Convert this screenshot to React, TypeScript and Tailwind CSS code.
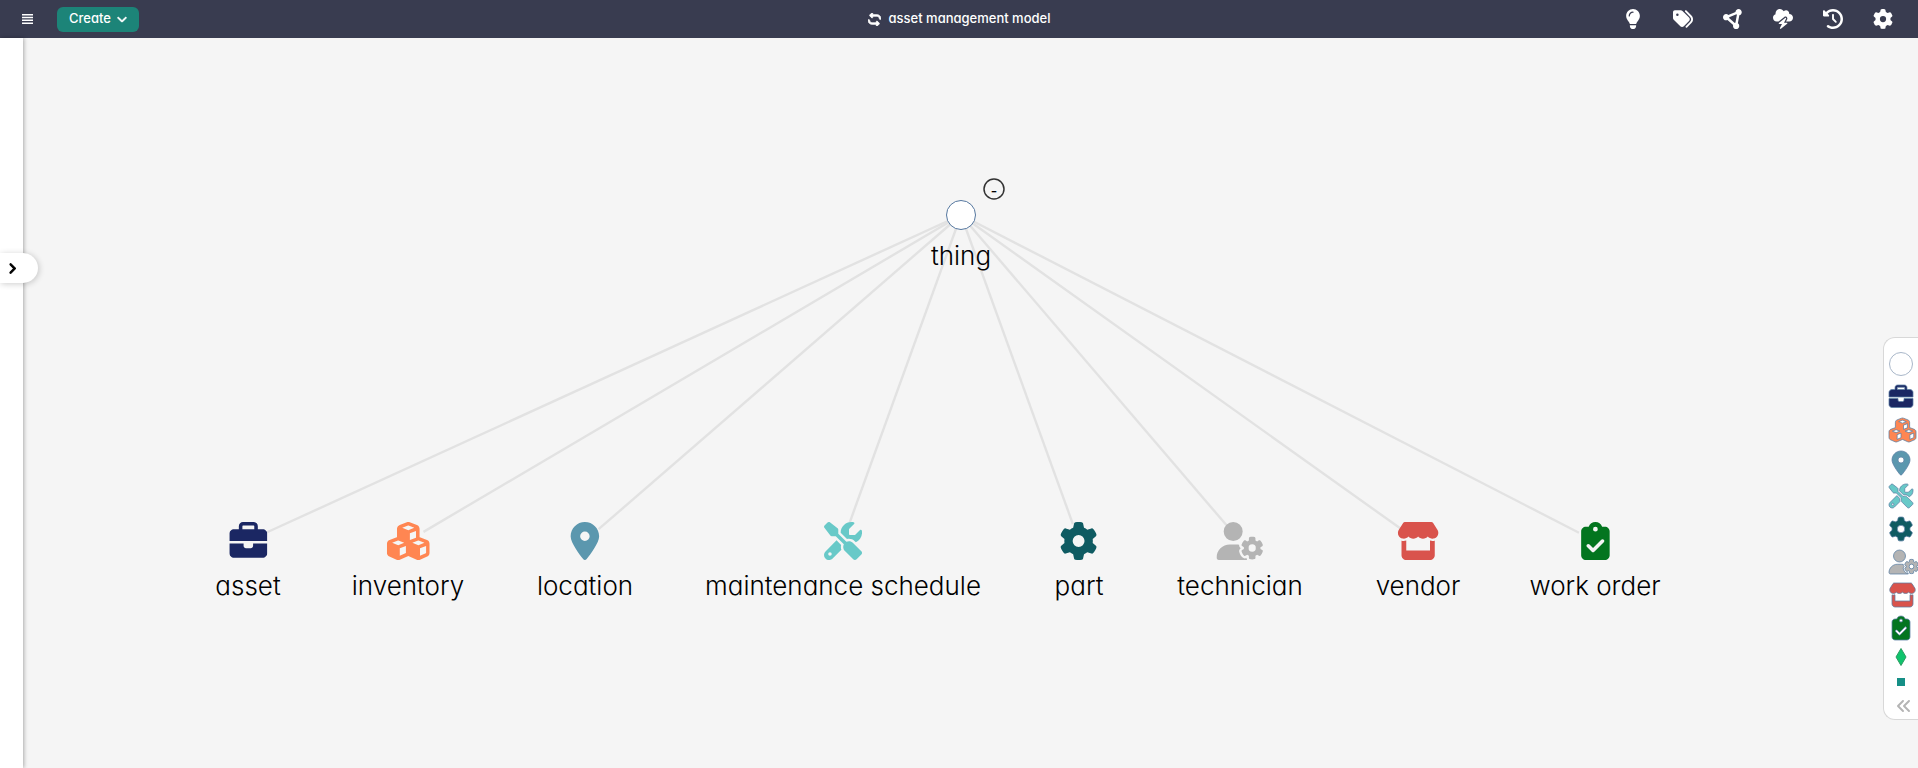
import { FaAnglesLeft, FaBriefcase, FaChevronDown, FaChevronRight, FaCircleNodes, FaClipboardCheck, FaClockRotateLeft, FaCloudBolt, FaCubes, FaGear, FaLightbulb, FaLocationDot, FaRepeat, FaScrewdriverWrench, FaStore, FaTags, FaUserGear } from 'react-icons/fa6';
import type { IconType } from 'react-icons';

type Concept = { label: string; x: number; icon: IconType; color: string; size: string; small: string };

const root = { x: 961, y: 177 };
const childY = 503;
const lineGap = 18;

const concepts: Concept[] = [
  { label: 'asset', x: 248, icon: FaBriefcase, color: 'text-[#1b2763]', size: 'w-[38px]', small: 'w-6' },
  { label: 'inventory', x: 408, icon: FaCubes, color: 'text-[#ff8652]', size: 'w-[43px]', small: 'w-[27px]' },
  { label: 'location', x: 585, icon: FaLocationDot, color: 'text-[#5b97ae]', size: 'w-[38px]', small: 'w-6' },
  { label: 'maintenance schedule', x: 843, icon: FaScrewdriverWrench, color: 'text-[#68c9c8]', size: 'w-[38px]', small: 'w-6' },
  { label: 'part', x: 1079, icon: FaGear, color: 'text-[#0f5b62]', size: 'w-[38px]', small: 'w-6' },
  { label: 'technician', x: 1240, icon: FaUserGear, color: 'text-[#b4b4b4]', size: 'w-[48px]', small: 'w-[30px]' },
  { label: 'vendor', x: 1418, icon: FaStore, color: 'text-[#d9534c]', size: 'w-[43px]', small: 'w-[27px]' },
  { label: 'work order', x: 1595, icon: FaClipboardCheck, color: 'text-[#03751f]', size: 'w-[38px]', small: 'w-6' },
];

const tools: { label: string; icon: IconType }[] = [
  { label: 'Ideas', icon: FaLightbulb },
  { label: 'Tags', icon: FaTags },
  { label: 'Graph', icon: FaCircleNodes },
  { label: 'Inference', icon: FaCloudBolt },
  { label: 'History', icon: FaClockRotateLeft },
  { label: 'Settings', icon: FaGear },
];

function Header() {
  return (
    <header className="grid h-[38px] shrink-0 grid-cols-3 items-center bg-[#393c50] text-white">
      <div className="flex items-center gap-6 pl-[22px]">
        <button type="button" aria-label="Menu">
          <svg className="h-2.5 w-[11px]" viewBox="0 0 11 10" fill="currentColor" aria-hidden="true">
            <path d="M0 0h11v1.5H0zM0 2.8h11v1.5H0zM0 5.6h11v1.5H0zM0 8.4h11v1.5H0z" />
          </svg>
        </button>
        <button type="button" className="flex h-[25px] w-[82px] items-center justify-center gap-1.5 rounded-md bg-[#1c8478] text-[13px] font-medium">
          Create
          <FaChevronDown className="h-2.5 w-2.5 stroke-current stroke-[40px]" />
        </button>
      </div>
      <div className="flex items-center justify-center gap-2 text-[13px] font-medium">
        <FaRepeat className="h-[13px] w-[13px] -scale-x-100 stroke-current stroke-[30px]" />
        <h1>asset management model</h1>
      </div>
      <div className="flex items-center justify-end gap-[30px] pr-[25px]">
        {tools.map(({ label, icon: Icon }) => (
          <button key={label} type="button" aria-label={label}>
            <Icon className="h-5 w-5" />
          </button>
        ))}
      </div>
    </header>
  );
}

function Edges() {
  return (
    <svg className="absolute inset-0 h-full w-full" aria-hidden="true">
      {concepts.map(({ label, x }) => {
        const dx = x - root.x;
        const dy = childY - root.y;
        const k = lineGap / Math.hypot(dx, dy);
        return (
          <line key={label} x1={root.x} y1={root.y} x2={x - dx * k} y2={childY - dy * k} stroke="#e2e2e2" strokeWidth="2.4" />
        );
      })}
      <circle cx={root.x} cy={root.y} r="14.5" fill="#fff" stroke="#55779f" />
    </svg>
  );
}

function Canvas() {
  return (
    <section className="relative min-w-0 flex-1 overflow-hidden" aria-label="Model graph">
      <div className="absolute inset-y-0 -left-[23px] right-0">
        <Edges />
        <span className="absolute left-[961px] top-[200px] -translate-x-1/2 text-[26px] leading-9 font-light">thing</span>
        <button type="button" aria-label="Collapse thing" className="absolute left-[983px] top-[140px] flex h-[22px] w-[22px] items-center justify-center">
          <svg className="absolute inset-0 h-full w-full" viewBox="0 0 22 22" fill="none" stroke="#333" strokeWidth="1.5" aria-hidden="true">
            <circle cx="11" cy="11" r="10" />
          </svg>
          <span className="pt-1 text-sm leading-4 font-medium">-</span>
        </button>
        {concepts.map(({ label, x, icon: Icon, color, size }) => (
          <div key={label} className="absolute top-[484px] flex -translate-x-1/2 flex-col items-center gap-2" style={{ left: x }}>
            <Icon className={`h-[38px] ${size} ${color}`} />
            <span className="whitespace-nowrap text-[26px] leading-9 font-light">{label}</span>
          </div>
        ))}
      </div>
    </section>
  );
}

function Palette() {
  return (
    <aside className="absolute right-0 top-[337px] flex w-[35px] flex-col items-center overflow-hidden rounded-l-xl border border-r-0 border-[#d8d8d8] bg-white pb-[5px] pt-3.5">
      <div className="flex w-6 flex-col items-start gap-[9px]">
        <span className="h-6 w-6 rounded-full border border-[#a9b7c9]" />
        {concepts.map(({ label, icon: Icon, color, small }) => (
          <button key={label} type="button" aria-label={label}>
            <Icon className={`h-6 overflow-visible stroke-[#5b7fa3] stroke-[16px] ${small} ${color}`} />
          </button>
        ))}
      </div>
      <svg className="mt-2 h-[18px] w-3" viewBox="0 0 12 18" aria-hidden="true">
        <path d="M6 .5 11 9 6 17.5 1 9Z" fill="#0fc46c" stroke="#2d9b62" />
      </svg>
      <span className="mt-3 h-2 w-2 bg-[#168f86]" />
      <button type="button" aria-label="Expand palette" className="mt-3 pl-1.5 text-[#b4b4b4]">
        <FaAnglesLeft className="h-4 w-4" />
      </button>
    </aside>
  );
}

export default function App() {
  return (
    <div className="relative flex h-screen flex-col overflow-hidden bg-[#f5f5f5] font-['Inter',sans-serif] text-black [font-feature-settings:'cv11']">
      <Header />
      <main className="flex min-h-0 flex-1">
        <aside className="relative z-10 w-[23px] shrink-0 bg-white shadow-[1px_0_4px_rgba(0,0,0,0.3)]">
          <button type="button" aria-label="Open panel" className="absolute left-0 top-[215px] flex h-[30px] w-[38px] items-center rounded-r-full bg-white pl-2 shadow-[1px_1px_6px_rgba(0,0,0,0.2)]">
            <FaChevronRight className="h-[11px] w-2 stroke-current stroke-[50px]" />
          </button>
        </aside>
        <Canvas />
      </main>
      <Palette />
    </div>
  );
}
